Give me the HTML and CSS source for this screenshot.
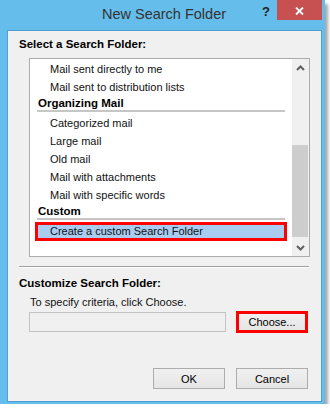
FILE: index.html
```html
<!DOCTYPE html>
<html lang="en">
<head>
    <meta charset="UTF-8">
    <meta name="viewport" content="width=device-width, initial-scale=1.0">
    <title>New Search Folder</title>
    <link rel="stylesheet" href="styles.css">
</head>
<body>

    <div class="window">
        <div class="titlebar">
            <span class="title">New Search Folder</span>
            <span class="help">?</span>
            <span class="close">
                <svg width="9" height="8" viewBox="0 0 9 8"><path d="M1 0.5 L8 7.5 M8 0.5 L1 7.5" stroke="#fff" stroke-width="1.8" fill="none"/></svg>
            </span>
        </div>

        <div class="client">
            <h2 class="label">Select a Search Folder:</h2>

            <div class="listbox">
                <div class="list">
                    <div class="item">Mail sent directly to me</div>
                    <div class="item">Mail sent to distribution lists</div>
                    <div class="group">Organizing Mail</div>
                    <div class="item">Categorized mail</div>
                    <div class="item">Large mail</div>
                    <div class="item">Old mail</div>
                    <div class="item">Mail with attachments</div>
                    <div class="item">Mail with specific words</div>
                    <div class="group">Custom</div>
                    <div class="item selected">Create a custom Search Folder</div>
                </div>
                <div class="scrollbar">
                    <div class="sb-btn">
                        <svg width="9" height="6" viewBox="0 0 9 6"><polyline points="1,5 4.5,1.5 8,5" stroke="#606060" stroke-width="2" fill="none"/></svg>
                    </div>
                    <div class="track"><div class="thumb"></div></div>
                    <div class="sb-btn">
                        <svg width="9" height="6" viewBox="0 0 9 6"><polyline points="1,1 4.5,4.5 8,1" stroke="#606060" stroke-width="2" fill="none"/></svg>
                    </div>
                </div>
            </div>

            <div class="divider"></div>

            <h2 class="label second">Customize Search Folder:</h2>
            <p class="hint">To specify criteria, click Choose.</p>

            <div class="criteria">
                <div class="textbox"></div>
                <button class="button marked">Choose...</button>
            </div>

            <div class="footer">
                <button class="button">OK</button>
                <button class="button">Cancel</button>
            </div>
        </div>
    </div>

</body>
</html>
```

FILE: styles.css
```css
body {
    margin: 0;
    background-color: white;
    font-family: "Liberation Sans", Arial, sans-serif;
    font-size: 11px;
    color: #111;
}
.window {
    box-sizing: border-box;
    width: 325px;
    height: 404px;
    padding: 0 3px 2px 7px;
    background-color: #65bdeb;
    box-shadow: 3px 4px 3px rgba(0, 0, 0, 0.35);
    display: flex;
    flex-direction: column;
}
.titlebar {
    height: 30px;
    flex: none;
    display: flex;
    align-items: flex-start;
}
.title {
    flex: 1;
    padding-left: 66px;
    padding-top: 4px;
    text-align: center;
    font-size: 14.5px;
    line-height: 20px;
    color: #333;
}
.help {
    width: 22px;
    padding-top: 5px;
    text-align: center;
    font-weight: bold;
    font-size: 13px;
    line-height: 14px;
    color: #222;
}
.close {
    width: 45px;
    height: 20px;
    padding-top: 1px;
    box-sizing: border-box;
    background-color: #c75050;
    display: flex;
    align-items: center;
    justify-content: center;
}
.client {
    flex: 1;
    background-color: #f0f0f0;
    border: 1px solid #4f9fd3;
    padding: 5px 11px 0 11px;
    display: flex;
    flex-direction: column;
}
.label {
    margin: 0;
    font-size: 11.5px;
    line-height: 16px;
    font-weight: bold;
    color: #000;
}
.label.second {
    margin-top: 7px;
}
.listbox {
    margin: 6px 0 0 10px;
    height: 199px;
    box-sizing: border-box;
    border: 1px solid #acacac;
    background-color: white;
    display: flex;
}
.list {
    flex: 1;
    padding-top: 1px;
    overflow: hidden;
}
.item {
    height: 18px;
    line-height: 18px;
    padding-left: 20px;
    white-space: nowrap;
}
.group {
    margin: 0 7px 2px 7px;
    padding-left: 1px;
    font-weight: bold;
    font-size: 11.5px;
    line-height: 14px;
    border-bottom: 2px solid #c6c6c6;
    color: #000;
}
.item.selected {
    box-sizing: border-box;
    height: 19px;
    line-height: 13px;
    margin: 0 5px;
    padding-left: 12px;
    border: 3px solid #ff0000;
    background-color: #a9cdf1;
}
.scrollbar {
    width: 17px;
    background-color: #f0f0f0;
    display: flex;
    flex-direction: column;
}
.sb-btn {
    height: 17px;
    display: flex;
    align-items: center;
    justify-content: center;
}
.track {
    flex: 1;
    padding-top: 69px;
}
.thumb {
    height: 92px;
    margin: 0 1px 0 0;
    background-color: #cdcdcd;
}
.divider {
    margin: 9px 1px 0 0;
    border-top: 1px solid #a0a0a0;
    border-bottom: 1px solid #fff;
}
.hint {
    margin: 3px 0 0 11px;
    line-height: 16px;
}
.criteria {
    margin: 1px 0 0 10px;
    display: flex;
    align-items: center;
    gap: 10px;
}
.textbox {
    width: 197px;
    height: 20px;
    box-sizing: border-box;
    border: 1px solid #c3c3c3;
    background-color: #f0f0f0;
}
.button {
    width: 72px;
    height: 21px;
    box-sizing: border-box;
    border: 1px solid #acacac;
    background: linear-gradient(#f0f0f0, #e5e5e5);
    font-family: "Liberation Sans", Arial, sans-serif;
    font-size: 11px;
    color: #000;
    padding: 0;
}
.button.marked {
    height: 22px;
    border: 3px solid #ff0000;
}
.footer {
    margin-top: 35px;
    padding-right: 2px;
    display: flex;
    justify-content: flex-end;
    gap: 11px;
}
```
